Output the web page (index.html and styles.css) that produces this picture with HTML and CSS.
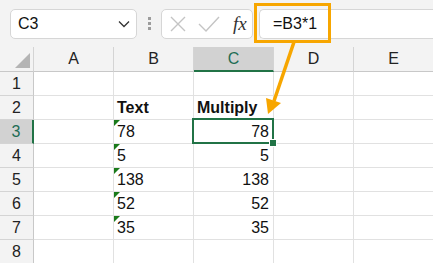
FILE: index.html
```html
<!DOCTYPE html>
<html lang="en">
<head>
<meta charset="UTF-8">
<meta name="viewport" content="width=device-width, initial-scale=1.0">
<title>Multiply by 1</title>
<link rel="stylesheet" href="styles.css">
</head>
<body>

<div class="app">
    <div class="toolbar">
        <div class="namebox">
            <span>C3</span>
            <svg class="chevron" width="12" height="8" viewBox="0 0 12 8"><path d="M1 1.5 L6 6.5 L11 1.5" fill="none" stroke="#333" stroke-width="1.3"/></svg>
        </div>
        <div class="grip"><i></i><i></i><i></i></div>
        <div class="fxbtns">
            <svg width="18" height="18" viewBox="0 0 18 18"><path d="M2 2 L16 16 M16 2 L2 16" stroke="#c4c4c4" stroke-width="1.4"/></svg>
            <svg width="22" height="18" viewBox="0 0 22 18"><path d="M1 9 L8 16 L21 2" fill="none" stroke="#c4c4c4" stroke-width="1.4"/></svg>
            <span class="fx">fx</span>
        </div>
        <div class="formula">=B3*1</div>
    </div>

    <div class="sheet">
        <!-- header row -->
        <div class="corner"><span class="corner-tri"></span></div>
        <div class="colhead">A</div>
        <div class="colhead">B</div>
        <div class="colhead sel">C</div>
        <div class="colhead">D</div>
        <div class="colhead">E</div>

        <div class="rowhead">1</div>
        <div class="cell"></div><div class="cell"></div><div class="cell"></div><div class="cell"></div><div class="cell"></div>

        <div class="rowhead">2</div>
        <div class="cell"></div>
        <div class="cell bold">Text</div>
        <div class="cell bold">Multiply</div>
        <div class="cell"></div><div class="cell"></div>

        <div class="rowhead sel">3</div>
        <div class="cell"></div>
        <div class="cell flag">78</div>
        <div class="cell num active">78</div>
        <div class="cell"></div><div class="cell"></div>

        <div class="rowhead">4</div>
        <div class="cell"></div>
        <div class="cell flag">5</div>
        <div class="cell num">5</div>
        <div class="cell"></div><div class="cell"></div>

        <div class="rowhead">5</div>
        <div class="cell"></div>
        <div class="cell flag">138</div>
        <div class="cell num">138</div>
        <div class="cell"></div><div class="cell"></div>

        <div class="rowhead">6</div>
        <div class="cell"></div>
        <div class="cell flag">52</div>
        <div class="cell num">52</div>
        <div class="cell"></div><div class="cell"></div>

        <div class="rowhead">7</div>
        <div class="cell"></div>
        <div class="cell flag">35</div>
        <div class="cell num">35</div>
        <div class="cell"></div><div class="cell"></div>

        <div class="rowhead">8</div>
        <div class="cell"></div><div class="cell"></div><div class="cell"></div><div class="cell"></div><div class="cell"></div>
    </div>

    <!-- callout over the formula bar -->
    <div class="callout"></div>
    <svg class="arrow" width="433" height="263" viewBox="0 0 433 263">
        <line x1="294" y1="42" x2="274" y2="101" stroke="#f7a600" stroke-width="3.5"/>
        <polygon points="266,98 281,103 268,114" fill="#f7a600"/>
    </svg>
</div>

</body>
</html>
```

FILE: styles.css
```css
body {
    margin: 0;
    font-family: "Liberation Sans", Arial, sans-serif;
    font-size: 16px;
    color: #111;
}
.app {
    position: relative;
    width: 433px;
    height: 263px;
    overflow: hidden;
    background: #fff;
}
.toolbar {
    display: flex;
    align-items: center;
    height: 47px;
    padding: 0 0 0 10px;
    box-sizing: border-box;
    background: #f3f3f3;
}
.namebox {
    display: flex;
    align-items: center;
    justify-content: space-between;
    width: 127px;
    height: 30px;
    box-sizing: border-box;
    padding: 0 6px 0 7px;
    background: #fff;
    border: 1px solid #d6d6d6;
    border-radius: 5px;
}
.grip {
    display: flex;
    flex-direction: column;
    gap: 2px;
    margin: 0 10px 0 11px;
}
.grip i {
    display: block;
    width: 3px;
    height: 3px;
    background: #9c9c9c;
}
.fxbtns {
    display: flex;
    align-items: center;
    gap: 11px;
    width: 92px;
    height: 30px;
    box-sizing: border-box;
    padding: 0 0 0 7px;
    background: #fff;
    border: 1px solid #d6d6d6;
    border-radius: 5px;
}
.fx {
    font-family: "Liberation Serif", serif;
    font-style: italic;
    font-size: 19px;
    color: #333;
    margin-left: 2px;
}
.formula {
    flex: 1;
    display: flex;
    align-items: center;
    height: 30px;
    box-sizing: border-box;
    margin-left: 6px;
    padding-left: 13px;
    background: #fff;
    border: 1px solid #d6d6d6;
    border-right: none;
    border-radius: 5px 0 0 5px;
}
.sheet {
    display: grid;
    grid-template-columns: 34px repeat(5, 80px);
    grid-template-rows: 25px repeat(8, 24px);
}
.sheet > div {
    box-sizing: border-box;
    border-right: 1px solid #e1e1e1;
    border-bottom: 1px solid #e1e1e1;
}
.corner, .colhead, .rowhead {
    background: #f3f3f3;
}
.sheet > .corner,
.sheet > .colhead {
    border-right-color: #d4d4d4;
    border-bottom-color: #c8c8c8;
}
.sheet > .rowhead {
    border-right-color: #c8c8c8;
    border-bottom-color: #d4d4d4;
}
.corner {
    position: relative;
}
.corner-tri {
    position: absolute;
    right: 3px;
    bottom: 3px;
    width: 0;
    height: 0;
    border-left: 15px solid transparent;
    border-bottom: 15px solid #b4b4b4;
}
.colhead {
    text-align: center;
    line-height: 24px;
    color: #222;
}
.rowhead {
    text-align: center;
    line-height: 24px;
    color: #222;
}
.sheet > .colhead.sel {
    background: #d2d2d2;
    color: #1e6d55;
    border-bottom: 2px solid #217346;
    line-height: 23px;
}
.sheet > .rowhead.sel {
    background: #d2d2d2;
    color: #1e6d55;
    border-right: 2px solid #217346;
}
.cell {
    position: relative;
    line-height: 24px;
    padding: 0 3px;
    white-space: nowrap;
}
.bold {
    font-weight: bold;
}
.num {
    text-align: right;
    padding-right: 4px;
}
.flag::before {
    content: "";
    position: absolute;
    left: 0;
    top: 0;
    border-top: 6px solid #1a7a1a;
    border-right: 6px solid transparent;
}
.active::after {
    content: "";
    position: absolute;
    left: -2px;
    top: -2px;
    right: -1px;
    bottom: -1px;
    border: 2px solid #217346;
}
.active::before {
    content: "";
    position: absolute;
    right: -4px;
    bottom: -4px;
    width: 6px;
    height: 6px;
    background: #217346;
    border: 1px solid #fff;
    z-index: 1;
}
.callout {
    position: absolute;
    left: 254px;
    top: 3px;
    width: 77px;
    height: 40px;
    box-sizing: border-box;
    border: 3px solid #f7a600;
}
.arrow {
    position: absolute;
    left: 0;
    top: 0;
}
```
